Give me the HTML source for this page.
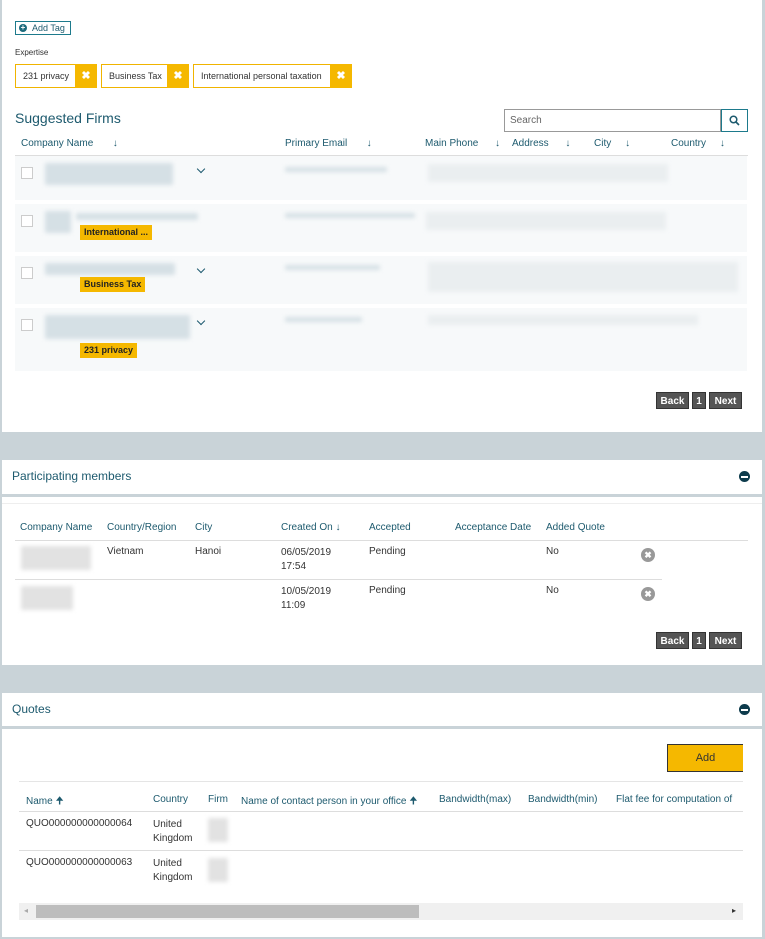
<!DOCTYPE html>
<html><head><style>
*{margin:0;padding:0;box-sizing:border-box}
body{width:765px;height:939px;background:#c9d3d8;font-family:"Liberation Sans",sans-serif;position:relative;overflow:hidden;color:#333}
.a{position:absolute}
.p{background:#fff}
.teal{color:#1d5a6e}
.h{font-size:10px;color:#1d5a6e}
.blur{position:absolute;background:#d5e0e5;filter:blur(2px);border-radius:2px}
.tag{position:absolute;height:24px;border:1px solid #f0b400;background:#fff;font-size:9px;line-height:22px;padding-left:7px}
.tag b{position:absolute;right:-1px;top:-1px;width:22px;height:24px;background:#f5b800;color:#fff;text-align:center;line-height:24px;font-size:11px}
.row{position:absolute;left:15px;width:732px;background:#f7f9fa}
.cb{position:absolute;left:6px;width:12px;height:12px;border:1px solid #ccc;background:#fff}
.yt{position:absolute;background:#f5b800;font-size:9px;font-weight:bold;color:#222;padding:0 4px;height:15px;line-height:15px}
.chev{position:absolute;width:6px;height:6px;border-right:1.6px solid #1d5a6e;border-bottom:1.6px solid #1d5a6e;transform:rotate(45deg)}
.btn{position:absolute;background:#555;color:#fff;font-size:10px;font-weight:bold;height:17px;line-height:17px;text-align:center;border:1px solid #333}
.t{position:absolute;font-size:10px;color:#333}
.circ{position:absolute;width:14px;height:14px;border-radius:50%;background:#999;color:#fff;font-size:9px;text-align:center;line-height:14px;font-weight:bold}
.minus{position:absolute;width:11px;height:11px;border-radius:50%;background:#0d3b4c}
.minus:after{content:"";position:absolute;left:2px;top:5px;width:7px;height:2px;background:#fff}
</style></head><body>
<div class="a p" style="left:2px;top:0;width:760px;height:432px"></div>
<div class="a" style="left:15px;top:21px;width:56px;height:14px;border:1px solid #1d7a8c;font-size:9px;color:#1d5a6e;line-height:12px;padding-left:16px">Add Tag</div>
<div class="a" style="left:19px;top:24px;width:8px;height:8px;border-radius:50%;background:#1d6a7c;color:#fff;font-size:8px;line-height:8px;text-align:center;font-weight:bold">+</div>
<div class="t" style="left:15px;top:48px;font-size:8px">Expertise</div>
<div class="tag" style="left:15px;top:64px;width:82px">231 privacy<b>✖</b></div>
<div class="tag" style="left:101px;top:64px;width:88px">Business Tax<b>✖</b></div>
<div class="tag" style="left:193px;top:64px;width:159px">International personal taxation<b>✖</b></div>
<div class="a teal" style="left:15px;top:110px;font-size:14px">Suggested Firms</div>
<div class="a" style="left:504px;top:109px;width:217px;height:23px;border:1px solid #999;font-size:10px;color:#666;line-height:21px;padding-left:5px">Search</div>
<div class="a" style="left:721px;top:109px;width:27px;height:23px;border:1px solid #1d7a8c;color:#1d5a6e;text-align:center;line-height:21px;font-size:11px">
<svg width="11" height="11" viewBox="0 0 11 11" style="margin-top:5px"><circle cx="4.5" cy="4.5" r="3.3" stroke="#1d5a6e" stroke-width="1.5" fill="none"/><path d="M7 7L10 10" stroke="#1d5a6e" stroke-width="1.6"/></svg></div>
<div class="h a" style="left:21px;top:138px">Company Name &nbsp;&nbsp;&nbsp;&nbsp;&nbsp;&nbsp;↓</div>
<div class="h a" style="left:285px;top:138px">Primary Email &nbsp;&nbsp;&nbsp;&nbsp;&nbsp;&nbsp;↓</div>
<div class="h a" style="left:425px;top:138px">Main Phone &nbsp;&nbsp;&nbsp;&nbsp;&nbsp;↓</div>
<div class="h a" style="left:512px;top:138px">Address &nbsp;&nbsp;&nbsp;&nbsp;&nbsp;↓</div>
<div class="h a" style="left:594px;top:138px">City &nbsp;&nbsp;&nbsp;&nbsp;↓</div>
<div class="h a" style="left:671px;top:138px">Country &nbsp;&nbsp;&nbsp;&nbsp;↓</div>
<div class="a" style="left:15px;top:155px;width:733px;height:1px;background:#ddd"></div>

<div class="row" style="top:156px;height:44px"><div class="cb" style="top:11px"></div></div>
<div class="row" style="top:204px;height:48px"><div class="cb" style="top:11px"></div></div>
<div class="row" style="top:256px;height:48px"><div class="cb" style="top:11px"></div></div>
<div class="row" style="top:308px;height:63px"><div class="cb" style="top:11px"></div></div>
<div class="blur" style="left:45px;top:163px;width:128px;height:22px"></div>
<div class="blur" style="left:45px;top:211px;width:26px;height:22px"></div><div class="blur" style="left:76px;top:213px;width:122px;height:7px"></div>
<div class="blur" style="left:45px;top:263px;width:130px;height:12px"></div>
<div class="blur" style="left:45px;top:315px;width:145px;height:24px"></div>
<div class="chev" style="left:198px;top:166px"></div><div class="chev" style="left:198px;top:266px"></div><div class="chev" style="left:198px;top:318px"></div>
<div class="yt" style="left:80px;top:225px">International ...</div>
<div class="yt" style="left:80px;top:277px">Business Tax</div>
<div class="yt" style="left:80px;top:343px">231 privacy</div>
<div class="blur" style="left:285px;top:167px;width:102px;height:5px"></div>
<div class="blur" style="left:285px;top:213px;width:130px;height:5px"></div>
<div class="blur" style="left:285px;top:265px;width:95px;height:5px"></div>
<div class="blur" style="left:285px;top:317px;width:77px;height:5px"></div>
<div class="blur" style="left:428px;top:164px;width:240px;height:18px;background:#eaeef0"></div>
<div class="blur" style="left:426px;top:212px;width:240px;height:18px;background:#eaeef0"></div>
<div class="blur" style="left:428px;top:262px;width:310px;height:30px;background:#eaeef0"></div>
<div class="blur" style="left:428px;top:315px;width:270px;height:10px;background:#eaeef0"></div>
<div class="btn" style="left:656px;top:392px;width:33px">Back</div>
<div class="btn" style="left:692px;top:392px;width:14px">1</div>
<div class="btn" style="left:709px;top:392px;width:33px">Next</div>

<div class="a p" style="left:2px;top:460px;width:760px;height:34px"></div>
<div class="a teal" style="left:12px;top:469px;font-size:12px">Participating members</div>
<div class="minus" style="left:739px;top:471px"></div>
<div class="a p" style="left:2px;top:497px;width:760px;height:168px"></div>
<div class="a" style="left:2px;top:503px;width:760px;height:1px;background:#eee"></div>
<div class="h a" style="left:20px;top:522px">Company Name</div>
<div class="h a" style="left:107px;top:522px">Country/Region</div>
<div class="h a" style="left:195px;top:522px">City</div>
<div class="h a" style="left:281px;top:522px">Created On ↓</div>
<div class="h a" style="left:369px;top:522px">Accepted</div>
<div class="h a" style="left:455px;top:522px">Acceptance Date</div>
<div class="h a" style="left:546px;top:522px">Added Quote</div>
<div class="a" style="left:15px;top:540px;width:733px;height:1px;background:#ddd"></div>
<div class="blur" style="left:21px;top:546px;width:70px;height:24px;background:#e2e2e2"></div>
<div class="t" style="left:107px;top:546px">Vietnam</div><div class="t" style="left:195px;top:546px">Hanoi</div>
<div class="t" style="left:281px;top:546px;line-height:14px">06/05/2019<br>17:54</div>
<div class="t" style="left:369px;top:546px">Pending</div><div class="t" style="left:546px;top:546px">No</div>
<div class="circ" style="left:641px;top:548px">✖</div>
<div class="a" style="left:15px;top:579px;width:647px;height:1px;background:#ddd"></div>
<div class="blur" style="left:21px;top:586px;width:52px;height:24px;background:#e2e2e2"></div>
<div class="t" style="left:281px;top:585px;line-height:14px">10/05/2019<br>11:09</div>
<div class="t" style="left:369px;top:585px">Pending</div><div class="t" style="left:546px;top:585px">No</div>
<div class="circ" style="left:641px;top:587px">✖</div>
<div class="btn" style="left:656px;top:632px;width:33px">Back</div>
<div class="btn" style="left:692px;top:632px;width:14px">1</div>
<div class="btn" style="left:709px;top:632px;width:33px">Next</div>

<div class="a p" style="left:2px;top:693px;width:760px;height:33px"></div>
<div class="a teal" style="left:12px;top:702px;font-size:12px">Quotes</div>
<div class="minus" style="left:739px;top:704px"></div>
<div class="a p" style="left:2px;top:729px;width:760px;height:208px"></div>
<div class="a" style="left:667px;top:744px;width:76px;height:28px;background:#f5b800;border:1px solid #333;border-right:none;font-size:11px;text-align:center;line-height:26px;color:#333">Add</div>
<div class="a" style="left:19px;top:781px;width:724px;height:1px;background:#e5e5e5"></div>
<div class="h a" style="left:26px;top:794px">Name 🠉</div>
<div class="h a" style="left:153px;top:794px">Country</div>
<div class="h a" style="left:208px;top:794px">Firm</div>
<div class="h a" style="left:241px;top:794px">Name of contact person in your office 🠉</div>
<div class="h a" style="left:439px;top:794px">Bandwidth(max)</div>
<div class="h a" style="left:528px;top:794px">Bandwidth(min)</div>
<div class="h a" style="left:616px;top:794px;white-space:nowrap">Flat fee for computation of</div>
<div class="a" style="left:19px;top:811px;width:724px;height:1px;background:#ddd"></div>
<div class="t" style="left:26px;top:818px">QUO000000000000064</div>
<div class="t" style="left:153px;top:818px;line-height:14px">United<br>Kingdom</div>
<div class="blur" style="left:208px;top:818px;width:20px;height:24px;background:#e2e2e2"></div>
<div class="a" style="left:19px;top:850px;width:724px;height:1px;background:#ddd"></div>
<div class="t" style="left:26px;top:857px">QUO000000000000063</div>
<div class="t" style="left:153px;top:857px;line-height:14px">United<br>Kingdom</div>
<div class="blur" style="left:208px;top:858px;width:20px;height:24px;background:#e2e2e2"></div>
<div class="a" style="left:19px;top:903px;width:724px;height:17px;background:#f0f0f0"></div>
<div class="a" style="left:36px;top:905px;width:383px;height:13px;background:#bdbdbd"></div>
<div class="a" style="left:24px;top:906px;font-size:8px;color:#aaa">◂</div>
<div class="a" style="left:732px;top:906px;font-size:8px;color:#333">▸</div>
</body></html>
